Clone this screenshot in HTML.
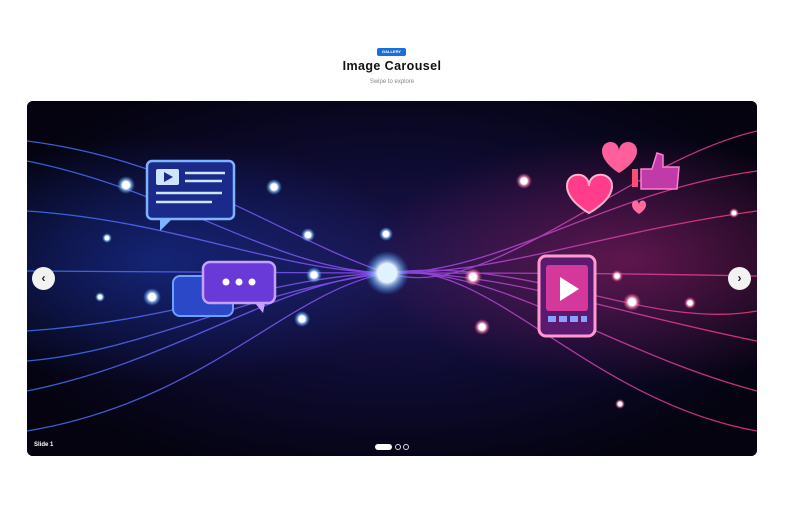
<!DOCTYPE html>
<html><head><meta charset="utf-8"><style>
*{margin:0;padding:0;box-sizing:border-box}
body{width:800px;height:505px;background:#fff;font-family:"Liberation Sans",sans-serif;position:relative;overflow:hidden}
.badge{position:absolute;left:377px;top:48px;width:29px;height:8px;background:#1a6fd6;border-radius:2px;color:#fff;font-size:4px;font-weight:bold;text-align:center;line-height:8px}
h1{position:absolute;left:0;width:784px;top:59px;text-align:center;font-size:12.5px;font-weight:bold;color:#111;letter-spacing:.4px}
.sub{position:absolute;left:0;width:784px;top:79px;text-align:center;font-size:6px;color:#888}
.car{position:absolute;left:27px;top:101px;width:730px;height:355px;border-radius:6px;overflow:hidden;background:#07061a}
.arrow{position:absolute;top:267px;width:23px;height:23px;border-radius:50%;background:#f2f2f2;color:#222;font-size:12px;font-weight:bold;text-align:center;line-height:22px}
.lbl{position:absolute;left:34px;top:442px;font-size:6px;color:#fff;font-weight:bold}
.dots{position:absolute;left:375px;top:444px}
.dots span{position:absolute;top:0;height:6px;border-radius:3px}
</style></head><body>
<div class="badge">GALLERY</div>
<h1>Image Carousel</h1>
<div class="sub">Swipe to explore</div>
<div class="car">
<svg width="730" height="355" viewBox="0 0 730 355">
<defs>
<radialGradient id="bg" cx="50%" cy="48%" r="60%"><stop offset="0" stop-color="#1c1650"/><stop offset=".5" stop-color="#0e0b32"/><stop offset="1" stop-color="#04030f"/></radialGradient>
<radialGradient id="lg" cx="18%" cy="45%" r="35%"><stop offset="0" stop-color="#1b3dbb" stop-opacity=".5"/><stop offset="1" stop-color="#1b3dbb" stop-opacity="0"/></radialGradient>
<radialGradient id="rg" cx="82%" cy="45%" r="35%"><stop offset="0" stop-color="#b0226a" stop-opacity=".5"/><stop offset="1" stop-color="#b0226a" stop-opacity="0"/></radialGradient>
<radialGradient id="glow"><stop offset="0" stop-color="#fff"/><stop offset=".4" stop-color="#fff"/><stop offset=".6" stop-color="#9cf" stop-opacity=".7"/><stop offset="1" stop-color="#39f" stop-opacity="0"/></radialGradient>
<radialGradient id="pglow"><stop offset="0" stop-color="#fff"/><stop offset=".4" stop-color="#fff"/><stop offset=".6" stop-color="#f9c" stop-opacity=".7"/><stop offset="1" stop-color="#f36" stop-opacity="0"/></radialGradient>
<linearGradient id="ln" x1="0" x2="1"><stop offset="0" stop-color="#3a7bff"/><stop offset=".5" stop-color="#a04dff"/><stop offset="1" stop-color="#ff3d7a"/></linearGradient>
</defs>
<rect width="730" height="355" fill="url(#bg)"/>
<rect width="730" height="355" fill="url(#lg)"/>
<rect width="730" height="355" fill="url(#rg)"/>
<g fill="none" stroke="url(#ln)" stroke-width="1.3" opacity=".8">
<path d="M0 60 C150 90 250 170 360 172 S580 90 730 70"/>
<path d="M0 110 C150 120 250 170 360 172 S580 130 730 110"/>
<path d="M0 170 C150 170 250 172 360 172 S580 172 730 175"/>
<path d="M0 230 C150 220 250 175 360 172 S580 210 730 240"/>
<path d="M0 290 C150 260 250 180 360 172 S580 250 730 290"/>
<path d="M0 330 C180 300 260 190 360 172 S560 300 730 330"/>
<path d="M0 40 C160 60 260 140 360 172 S600 60 730 30"/>
<path d="M0 260 C120 250 220 190 360 172 S620 230 730 210"/>
</g>
<g fill="url(#glow)">
<circle cx="360" cy="172" r="22"/><circle cx="99" cy="84" r="9"/><circle cx="125" cy="196" r="9"/><circle cx="275" cy="218" r="8"/><circle cx="287" cy="174" r="8"/><circle cx="281" cy="134" r="7"/><circle cx="247" cy="86" r="8"/><circle cx="359" cy="133" r="7"/><circle cx="73" cy="196" r="5"/><circle cx="80" cy="137" r="5"/>
</g>
<g fill="url(#pglow)">
<circle cx="497" cy="80" r="8"/><circle cx="446" cy="176" r="9"/><circle cx="455" cy="226" r="8"/><circle cx="605" cy="201" r="9"/><circle cx="590" cy="175" r="6"/><circle cx="663" cy="202" r="6"/><circle cx="707" cy="112" r="5"/><circle cx="593" cy="303" r="5"/>
</g>
<circle cx="360" cy="172" r="9" fill="#dff2ff"/>
<rect x="120" y="60" width="87" height="58" rx="5" fill="#1a2a8a" stroke="#7fb2ff" stroke-width="2.5"/>
<rect x="129" y="68" width="23" height="16" rx="2" fill="#cfe4ff"/><path d="M137 71 L146 76 L137 81Z" fill="#1a2a8a"/>
<g stroke="#cfe4ff" stroke-width="2.5"><line x1="158" y1="72" x2="198" y2="72"/><line x1="158" y1="80" x2="195" y2="80"/><line x1="129" y1="92" x2="195" y2="92"/><line x1="129" y1="101" x2="185" y2="101"/></g>
<path d="M133 118 L133 130 L145 118Z" fill="#7fb2ff"/>
<rect x="146" y="175" width="60" height="40" rx="7" fill="#2a48c8" stroke="#6ea0ff" stroke-width="2"/>
<rect x="176" y="161" width="72" height="41" rx="7" fill="#6a3ad8" stroke="#c7a0ff" stroke-width="2.5"/>
<path d="M228 202 L236 212 L238 202Z" fill="#c7a0ff"/>
<circle cx="199" cy="181" r="3.5" fill="#fff"/><circle cx="212" cy="181" r="3.5" fill="#fff"/><circle cx="225" cy="181" r="3.5" fill="#fff"/>
<rect x="512" y="155" width="56" height="80" rx="7" fill="#5a1a70" stroke="#ff9ad0" stroke-width="3"/>
<rect x="519" y="164" width="42" height="46" rx="3" fill="#d4389a"/>
<path d="M533 176 L552 188 L533 200Z" fill="#fff"/>
<g fill="#8aa0ff"><rect x="521" y="215" width="8" height="6"/><rect x="532" y="215" width="8" height="6"/><rect x="543" y="215" width="8" height="6"/><rect x="554" y="215" width="6" height="6"/></g>
<path d="M575 50 C575 38 592 38 592 50 C592 38 610 38 610 50 C610 62 592 72 592 72 C592 72 575 62 575 50Z" fill="#ff5f9a"/>
<path d="M540 85 C540 70 562 70 562 85 C562 70 585 70 585 85 C585 100 562 112 562 112 C562 112 540 100 540 85Z" fill="#ff3d8a" stroke="#ffb3d0" stroke-width="2"/>
<rect x="605" y="68" width="6" height="18" fill="#ff4d7a"/><path d="M614 68 L625 68 L630 52 L636 54 L636 66 L652 66 L650 88 L614 88Z" fill="#c03aa8" stroke="#ff7fd0" stroke-width="1.5"/>
<path d="M605 104 C605 98 612 98 612 104 C612 98 619 98 619 104 C619 109 612 113 612 113 C612 113 605 109 605 104Z" fill="#ff6aa0"/>
</svg>
</div>
<div class="arrow" style="left:32px">‹</div>
<div class="arrow" style="left:728px">›</div>
<div class="lbl">Slide 1</div>
<div class="dots"><span style="left:0;width:17px;background:#fff"></span><span style="left:20px;width:6px;border:1px solid #ddd"></span><span style="left:28px;width:6px;border:1px solid #ddd"></span></div>
</body></html>
